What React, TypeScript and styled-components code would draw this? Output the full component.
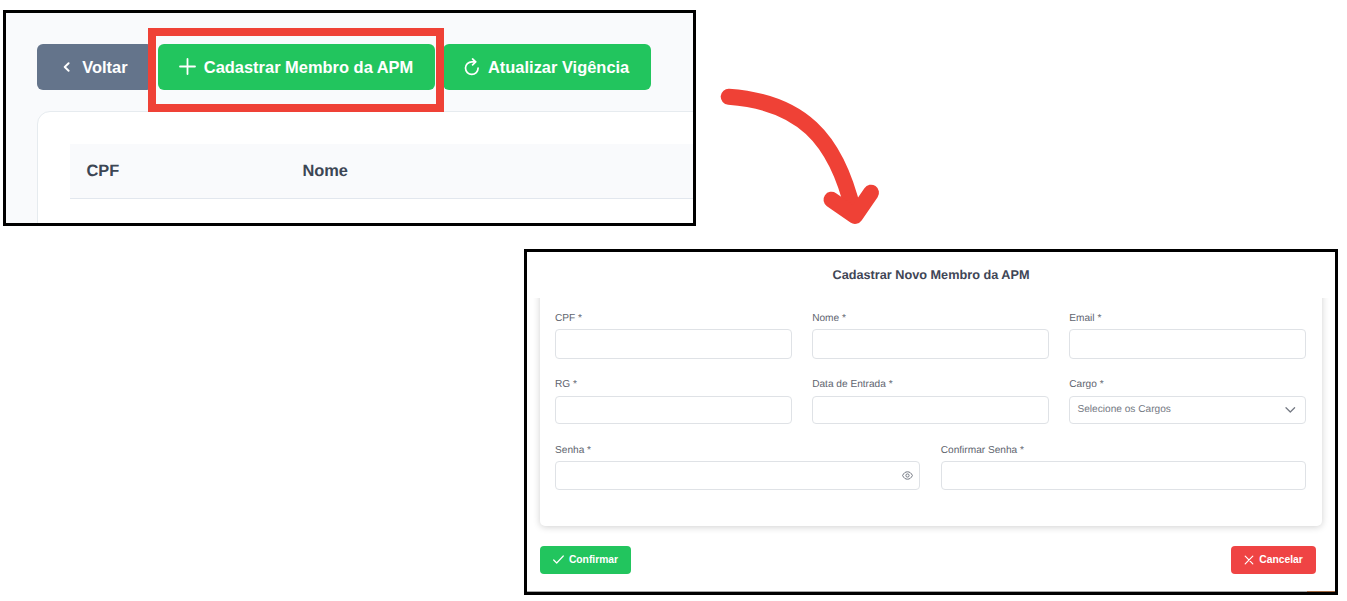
import React from "react";
import styled, { createGlobalStyle } from "styled-components";

const GlobalStyle = createGlobalStyle`
  *, *::before, *::after { box-sizing: border-box; }
  html, body { margin: 0; background: #fff; overflow: hidden; }
  body { font-family: "Liberation Sans", Arial, sans-serif; text-rendering: geometricPrecision; }
`;

const Page = styled.main`
  width: 1347px;
  height: 601px;
  padding: 10px 9px 0 3px;
  display: flex;
  flex-direction: column;
  gap: 23px;
`;

const TopRow = styled.div`
  display: flex;
  height: 216px;
`;

const ListFrame = styled.section`
  position: relative;
  width: 693px;
  height: 216px;
  border: 3px solid #000;
  background: #f9fafc;
  padding: 31px 0 0 30.7px;
  overflow: hidden;
`;

const Toolbar = styled.div`
  display: flex;
  height: 46px;
`;

const ToolButton = styled.button<{ $width: number; $gap: number; $pad: number; $tone?: string; $offset?: number }>`
  display: flex;
  align-items: center;
  flex: none;
  width: ${(p) => p.$width}px;
  height: 46px;
  margin: 0 0 0 ${(p) => p.$offset ?? 0}px;
  padding: 0 0 0 ${(p) => p.$pad}px;
  gap: ${(p) => p.$gap}px;
  border: 0;
  border-radius: 6px;
  background: ${(p) => p.$tone ?? "#22c55e"};
  color: #fff;
  font: bold 16.45px "Liberation Sans", Arial, sans-serif;
  white-space: nowrap;
  svg { flex: none; margin-bottom: 1px; }
`;

const Highlight = styled.div`
  position: absolute;
  left: 142px;
  top: 15px;
  width: 296px;
  height: 84px;
  border: 8px solid #ef4136;
`;

const ListCard = styled.div`
  width: 700px;
  height: 130px;
  margin-top: 21px;
  padding: 32px 0 0 32.5px;
  border: 1px solid #e6ebef;
  border-radius: 13px;
  background: #fff;
`;

const TableHead = styled.div`
  display: grid;
  grid-template-columns: 216px 1fr;
  align-items: center;
  height: 55px;
  padding: 1px 0 0 16.2px;
  background: #f9fafc;
  border-bottom: 1px solid #e2e7ee;
  color: #3c4654;
  font-size: 16.4px;
  font-weight: bold;
`;

const ArrowArt = styled.svg`
  width: 180px;
  height: 160px;
  margin: 70px 0 0 14px;
  flex: none;
`;

const DialogFrame = styled.section`
  align-self: flex-end;
  width: 814px;
  height: 346px;
  border: 3px solid #000;
  background:
    linear-gradient(#a0673f, #a0673f) right bottom / 28px 1px no-repeat,
    linear-gradient(#a6a6a6, #a6a6a6) left bottom / 100% 1px no-repeat,
    #fff;
  display: flex;
  flex-direction: column;
`;

const DialogTitle = styled.h1`
  margin: 0;
  height: 46px;
  padding: 15px 0 0;
  text-align: center;
  color: #3f4656;
  font-size: 12.7px;
  line-height: 17px;
`;

const DialogBody = styled.div`
  height: 242px;
  padding: 0 13.5px 0 13px;
  overflow: hidden;
`;

const FormCard = styled.form`
  height: 238px;
  margin-top: -10px;
  padding: 24px 15.5px 0 15px;
  border-radius: 5px;
  background: #fff;
  box-shadow: 0 1px 7px rgba(0, 0, 0, 0.19);
  display: flex;
  flex-direction: column;
`;

const FieldRow = styled.div<{ $columns: number }>`
  display: grid;
  grid-template-columns: repeat(${(p) => p.$columns}, 1fr);
  column-gap: 20.4px;
  height: 66px;
  flex: none;
`;

const Field = styled.label`
  display: flex;
  flex-direction: column;
  color: #61656f;
  font-size: 10.15px;
  line-height: 13px;
`;

const Control = styled.span<{ $height?: number; $gap?: number }>`
  display: flex;
  align-items: center;
  justify-content: space-between;
  height: ${(p) => p.$height ?? 29}px;
  margin-top: ${(p) => p.$gap ?? 4.6}px;
  padding: 0 6.5px 0 7.2px;
  border: 1px solid #dfe2e6;
  border-radius: 4px;
  color: #747983;
`;

const Actions = styled.footer`
  display: flex;
  justify-content: space-between;
  padding: 6px 19px 0 13px;
`;

const ActionButton = styled.button<{ $width: number; $tone: string }>`
  display: flex;
  align-items: center;
  justify-content: center;
  gap: 5px;
  width: ${(p) => p.$width}px;
  height: 28px;
  padding: 0 0 1px;
  border: 0;
  border-radius: 4px;
  background: ${(p) => p.$tone};
  color: #fff;
  font: bold 10.3px "Liberation Sans", Arial, sans-serif;
`;

type IconProps = { d: string; w: number; h: number; stroke?: number };

const Icon = ({ d, w, h, stroke = 1.5 }: IconProps) => (
  <svg width={w} height={h} viewBox={`0 0 ${w} ${h}`} fill="none" stroke="currentColor" strokeWidth={stroke} strokeLinecap="round" strokeLinejoin="round">
    <path d={d} />
  </svg>
);

const RefreshIcon = () => (
  <svg width="16" height="18" viewBox="0 0 16 18" fill="none" stroke="currentColor" strokeWidth="1.7" strokeLinecap="round" strokeLinejoin="round">
    <path d="M8.6 1L11.7 3.8L8.6 6.8" />
    <path d="M11.4 3.8H7.8A6.3 6.3 0 1 0 14.1 10.1" />
  </svg>
);

const EyeIcon = () => (
  <svg width="11" height="9" viewBox="0 0 11 9" fill="none" stroke="currentColor" strokeWidth="1">
    <path d="M.6 4.5C1.7 2 3.4.8 5.5.8S9.3 2 10.4 4.5C9.3 7 7.6 8.2 5.5 8.2S1.7 7 .6 4.5Z" />
    <circle cx="5.5" cy="4.5" r="1.6" />
  </svg>
);

type TextFieldProps = { label: string; height?: number; gap?: number; children?: React.ReactNode };

const TextField = ({ label, height, gap, children }: TextFieldProps) => (
  <Field>
    {label} *
    <Control $height={height} $gap={gap}>{children}</Control>
  </Field>
);

export default function App() {
  return (
    <>
      <GlobalStyle />
      <Page>
        <TopRow>
          <ListFrame>
            <Toolbar>
              <ToolButton $width={116} $pad={26} $gap={12.5} $tone="#64748b">
                <Icon w={7} h={10} stroke={1.9} d="M5.6 1.2L1.7 5L5.6 8.8" />
                Voltar
              </ToolButton>
              <ToolButton $width={277} $pad={20.8} $gap={8} $offset={5.3}>
                <Icon w={17} h={17} d="M8.5 1V16M1 8.5H16" stroke={1.8} />
                Cadastrar Membro da APM
              </ToolButton>
              <ToolButton $width={208.5} $pad={20.8} $gap={8.2} $offset={8}>
                <RefreshIcon />
                Atualizar Vigência
              </ToolButton>
            </Toolbar>
            <ListCard>
              <TableHead>
                <span>CPF</span>
                <span>Nome</span>
              </TableHead>
            </ListCard>
            <Highlight />
          </ListFrame>
          <ArrowArt viewBox="710 80 180 160" fill="none" stroke="#ef4136" strokeWidth="16" strokeLinecap="round" strokeLinejoin="round">
            <path d="M728.7 96.7C800 102 836 137 853.5 212" />
            <path d="M831.5 199.7L855 216L871 192.7" />
          </ArrowArt>
        </TopRow>
        <DialogFrame>
          <DialogTitle>Cadastrar Novo Membro da APM</DialogTitle>
          <DialogBody>
            <FormCard>
              <FieldRow $columns={3}>
                <TextField label="CPF" height={30} gap={4} />
                <TextField label="Nome" height={30} gap={4} />
                <TextField label="Email" height={30} gap={4} />
              </FieldRow>
              <FieldRow $columns={3}>
                <TextField label="RG" height={28} />
                <TextField label="Data de Entrada" height={28} />
                <TextField label="Cargo" height={28}>
                  Selecione os Cargos
                  <Icon w={15} h={8} stroke={1.25} d="M3 1.7L7.3 6L11.6 1.7" />
                </TextField>
              </FieldRow>
              <FieldRow $columns={2}>
                <TextField label="Senha" gap={4}>
                  <span />
                  <EyeIcon />
                </TextField>
                <TextField label="Confirmar Senha" gap={4} />
              </FieldRow>
            </FormCard>
          </DialogBody>
          <Actions>
            <ActionButton $width={91} $tone="#22c55e">
              <Icon w={11} h={9} stroke={1.2} d="M.7 5L3.7 8L10.3 1" />
              Confirmar
            </ActionButton>
            <ActionButton $width={85} $tone="#ef4444">
              <Icon w={10} h={10} stroke={1.2} d="M1.2 1.2L8.8 8.8M8.8 1.2L1.2 8.8" />
              Cancelar
            </ActionButton>
          </Actions>
        </DialogFrame>
      </Page>
    </>
  );
}
